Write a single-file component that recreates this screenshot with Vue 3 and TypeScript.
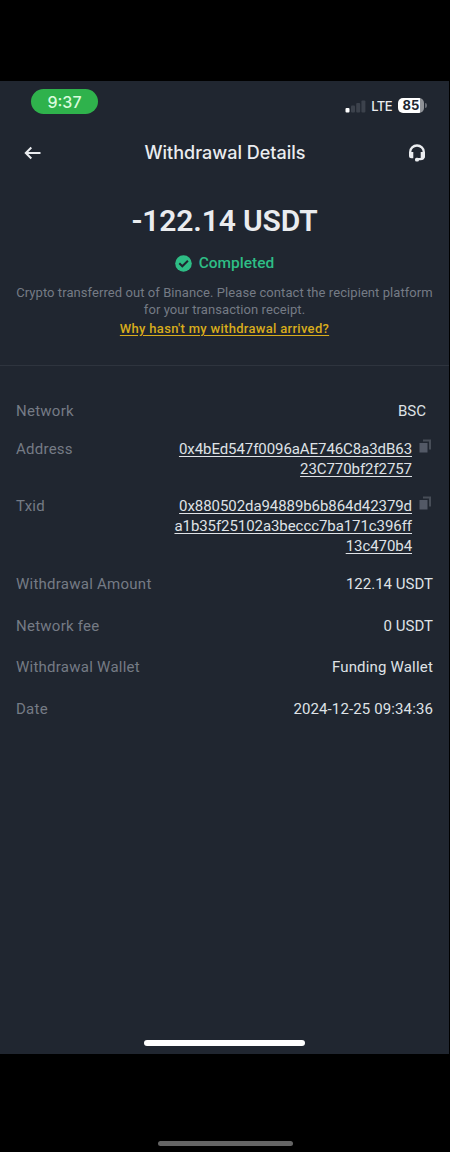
<template>
  <div class="device">
    <main class="screen">
      <div class="status-bar">
        <span class="clock">9:37</span>
        <div class="indicators">
          <svg class="signal" width="21" height="13" viewBox="0 0 21 13">
            <rect x="0.5" y="8" width="4" height="4.5" rx="1" fill="#fff" />
            <rect x="6" y="5.5" width="4" height="7" rx="1" fill="#3c424c" />
            <rect x="11.2" y="3" width="4" height="9.5" rx="1" fill="#3c424c" />
            <rect x="16.4" y="0.5" width="4" height="12" rx="1" fill="#3c424c" />
          </svg>
          <span class="carrier">LTE</span>
          <div class="battery">
            <span class="battery-level">85</span>
          </div>
        </div>
      </div>

      <header class="nav">
        <svg class="back" width="18" height="14" viewBox="0 0 18 14">
          <path d="M16.5 7H2M7.3 1.5L1.8 7l5.5 5.5" fill="none" stroke="#eaecef" stroke-width="2" />
        </svg>
        <h1 class="title">Withdrawal Details</h1>
        <svg class="support" width="18" height="18" viewBox="0 0 18 18">
          <path d="M2.200 9V7.900a6.800 6.400 0 0 1 13.600 0V12q0 3-3.500 3.200H10" fill="none" stroke="#eaecef" stroke-width="2.300" />
          <path d="M1 8h4.300v6.200H3.500q-2.500 0-2.500-2.500zM12.700 8H17v4q0 2.200-2 2.200h-2.300z" fill="#eaecef" />
          <rect x="7" y="13.700" width="4" height="3.800" rx="1.500" fill="#eaecef" />
        </svg>
      </header>

      <section class="summary">
        <div class="amount">-122.14 USDT</div>
        <div class="status">
          <svg width="17" height="17" viewBox="0 0 17 17">
            <circle cx="8.500" cy="8.500" r="8.300" fill="#2ebd85" />
            <path d="M4.300 8.300l3 3 5.600-5.600" fill="none" stroke="#202630" stroke-width="2" />
          </svg>
          <span class="status-text">Completed</span>
        </div>
        <p class="note">
          Crypto transferred out of Binance. Please contact the recipient platform<br />
          for your transaction receipt.
        </p>
        <a class="help">Why hasn't my withdrawal arrived?</a>
      </section>

      <dl class="details">
        <div v-for="row in rows" :key="row.id" class="row" :class="row.id">
          <dt class="label">{{ row.label }}</dt>
          <dd class="value" :class="{ link: row.copyable }">
            <span v-for="line in row.lines" :key="line" class="line">{{ line }}</span>
          </dd>
          <svg v-if="row.copyable" class="copy" width="13" height="14" viewBox="0 0 13 14">
            <path d="M4 0.500h8v10h-2v-8H4z" fill="#474d57" />
            <rect x="0.500" y="4" width="8" height="9.500" fill="#535966" />
          </svg>
        </div>
      </dl>

      <div class="home-indicator"></div>
    </main>
    <div class="gesture-bar"></div>
  </div>
</template>

<script setup lang="ts">
interface DetailRow {
  id: string;
  label: string;
  lines: string[];
  copyable?: boolean;
}

const rows: DetailRow[] = [
  { id: 'network', label: 'Network', lines: ['BSC'] },
  {
    id: 'address',
    label: 'Address',
    lines: ['0x4bEd547f0096aAE746C8a3dB63', '23C770bf2f2757'],
    copyable: true,
  },
  {
    id: 'txid',
    label: 'Txid',
    lines: ['0x880502da94889b6b864d42379d', 'a1b35f25102a3beccc7ba171c396ff', '13c470b4'],
    copyable: true,
  },
  { id: 'total', label: 'Withdrawal Amount', lines: ['122.14 USDT'] },
  { id: 'fee', label: 'Network fee', lines: ['0 USDT'] },
  { id: 'wallet', label: 'Withdrawal Wallet', lines: ['Funding Wallet'] },
  { id: 'date', label: 'Date', lines: ['2024-12-25 09:34:36'] },
];
</script>

<style>
body {
  margin: 0;
  background: #000;
}
</style>

<style scoped>
.device {
  box-sizing: border-box;
  width: 450px;
  height: 1152px;
  padding-top: 81px;
  background: #000;
  font-family: Roboto, 'Liberation Sans', sans-serif;
  overflow: hidden;
}

.screen {
  display: flex;
  flex-direction: column;
  width: 449px;
  height: 973px;
  background: #202630;
  color: #eaecef;
}

.status-bar {
  display: flex;
  justify-content: space-between;
  align-items: flex-start;
  height: 42px;
  padding: 8px 22px 0 31px;
  box-sizing: border-box;
}

.clock {
  width: 67px;
  height: 25px;
  border-radius: 13px;
  background: #2fb24c;
  color: #d9fbdc;
  font: 500 16px/26px Inter, sans-serif;
  text-align: center;
}

.indicators {
  display: flex;
  align-items: center;
  height: 16px;
  margin-top: 9px;
}

.carrier {
  margin-left: 5px;
  font: 500 13px/16px Inter, sans-serif;
  letter-spacing: -0.6px;
}

.battery {
  position: relative;
  width: 26px;
  height: 15px;
  margin: -1px 3px 0 6px;
  border-radius: 5px;
  background: linear-gradient(to right, #fff 85%, #8f9297 85%);
}

.battery::after {
  content: '';
  position: absolute;
  top: 5px;
  right: -3px;
  width: 2px;
  height: 5px;
  border-radius: 0 2px 2px 0;
  background: #666b73;
}

.battery-level {
  display: block;
  color: #202630;
  font: 700 13px/15px Inter, sans-serif;
  text-align: center;
}

.nav {
  display: flex;
  align-items: center;
  justify-content: space-between;
  height: 60px;
  padding: 0 23px 0 24px;
}

.title {
  margin: 0;
  font: 500 18px/24px Inter, sans-serif;
}

.summary {
  display: flex;
  flex-direction: column;
  align-items: center;
  height: 182px;
  border-bottom: 1px solid #2e343e;
}

.amount {
  margin-top: 19px;
  font-size: 30px;
  font-weight: 600;
  line-height: 38px;
  letter-spacing: -0.15px;
}

.status {
  display: flex;
  align-items: center;
  gap: 7px;
  height: 20px;
  margin-top: 13px;
  color: #2ebd85;
  font-size: 15.500px;
  font-weight: 500;
}

.note {
  margin: 12px 0 0;
  color: #757b85;
  font-size: 13px;
  line-height: 16.500px;
  letter-spacing: 0.07px;
  text-align: center;
  white-space: nowrap;
}

.help {
  margin-top: 2px;
  color: #d8ac1c;
  font-size: 13px;
  font-weight: 500;
  line-height: 18px;
  letter-spacing: 0.3px;
  text-decoration: underline;
  text-underline-offset: 2px;
}

.details {
  margin: 35px 16px 0;
  font-size: 15px;
}

.row {
  display: flex;
  align-items: flex-start;
  line-height: 20px;
}

.label {
  flex: 1;
  color: #757b85;
  letter-spacing: 0.25px;
}

.value {
  display: flex;
  flex-direction: column;
  align-items: flex-end;
  margin: 0;
  color: #dfe2e6;
  line-height: 20px;
}

.link {
  margin-right: 7px;
  letter-spacing: -0.07px;
  text-decoration: underline;
  text-underline-offset: 2px;
}

.copy {
  margin-right: 1px;
}

.network {
  height: 38px;
  padding-right: 7px;
}

.address {
  height: 57px;
}

.txid {
  height: 78px;
}

.total,
.fee,
.wallet {
  height: 41.500px;
}

.wallet .value {
  letter-spacing: 0.18px;
}

.date .value {
  letter-spacing: 0.12px;
}

.home-indicator {
  width: 161px;
  height: 6px;
  margin: auto auto 8px;
  border-radius: 3px;
  background: #fff;
}

.gesture-bar {
  width: 135px;
  height: 5px;
  margin: 87px auto 0;
  border-radius: 3px;
  background: #646464;
}
</style>
